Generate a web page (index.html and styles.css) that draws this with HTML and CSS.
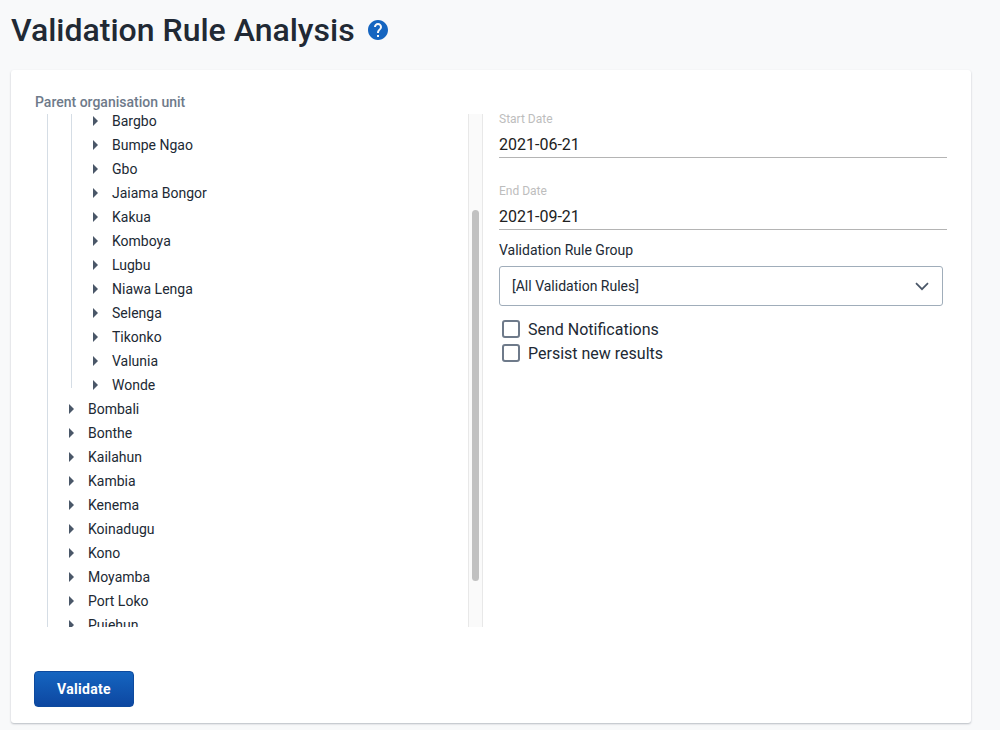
FILE: index.html
```html
<!DOCTYPE html>
<html>
<head>
  <meta charset="utf-8" />
  <title>Validation Rule Analysis</title>
  <link rel="stylesheet" href="styles.css">
</head>
<body>

<div class="titleRow">
  <h1>Validation Rule Analysis</h1>
  <svg class="helpIcon" width="24" height="24" viewBox="0 0 24 24">
    <path fill="#1565c0" d="M12 2C6.48 2 2 6.48 2 12s4.48 10 10 10 10-4.48 10-10S17.52 2 12 2zm1 17h-2v-2h2v2zm2.07-7.75l-.9.92C13.45 12.9 13 13.5 13 15h-2v-.5c0-1.1.45-2.1 1.17-2.83l1.24-1.26c.37-.36.59-.86.59-1.41 0-1.1-.9-2-2-2s-2 .9-2 2H8c0-2.21 1.79-4 4-4s4 1.79 4 4c0 .88-.36 1.68-.93 2.25z"/>
  </svg>
</div>

<div class="card">
  <div class="columns">

    <div class="treeCol">
      <div class="treeLabel">Parent organisation unit</div>
      <div class="treeBox">
        <div class="treeView">
          <div class="treeLevel1">
            <div class="treeLevel2">
              <div class="treeRow"><span class="arrow"></span>Bargbo</div>
              <div class="treeRow"><span class="arrow"></span>Bumpe Ngao</div>
              <div class="treeRow"><span class="arrow"></span>Gbo</div>
              <div class="treeRow"><span class="arrow"></span>Jaiama Bongor</div>
              <div class="treeRow"><span class="arrow"></span>Kakua</div>
              <div class="treeRow"><span class="arrow"></span>Komboya</div>
              <div class="treeRow"><span class="arrow"></span>Lugbu</div>
              <div class="treeRow"><span class="arrow"></span>Niawa Lenga</div>
              <div class="treeRow"><span class="arrow"></span>Selenga</div>
              <div class="treeRow"><span class="arrow"></span>Tikonko</div>
              <div class="treeRow"><span class="arrow"></span>Valunia</div>
              <div class="treeRow"><span class="arrow"></span>Wonde</div>
            </div>
            <div class="treeRow"><span class="arrow"></span>Bombali</div>
            <div class="treeRow"><span class="arrow"></span>Bonthe</div>
            <div class="treeRow"><span class="arrow"></span>Kailahun</div>
            <div class="treeRow"><span class="arrow"></span>Kambia</div>
            <div class="treeRow"><span class="arrow"></span>Kenema</div>
            <div class="treeRow"><span class="arrow"></span>Koinadugu</div>
            <div class="treeRow"><span class="arrow"></span>Kono</div>
            <div class="treeRow"><span class="arrow"></span>Moyamba</div>
            <div class="treeRow"><span class="arrow"></span>Port Loko</div>
            <div class="treeRow"><span class="arrow"></span>Pujehun</div>
          </div>
        </div>
        <div class="scrollTrack"><div class="scrollThumb"></div></div>
      </div>
    </div>

    <div class="formCol">
      <div class="dateField">
        <label>Start Date</label>
        <div class="dateValue">2021-06-21</div>
      </div>
      <div class="dateField">
        <label>End Date</label>
        <div class="dateValue">2021-09-21</div>
      </div>
      <div class="selectLabel">Validation Rule Group</div>
      <div class="selectBox">
        <span>[All Validation Rules]</span>
        <svg width="14" height="9" viewBox="0 0 14 9">
          <path d="M1 1.2l6 6 6-6" fill="none" stroke="#4a5768" stroke-width="1.7"/>
        </svg>
      </div>
      <div class="checkRow"><span class="checkBox"></span>Send Notifications</div>
      <div class="checkRow"><span class="checkBox"></span>Persist new results</div>
    </div>

  </div>
  <button class="validateBtn">Validate</button>
</div>

</body>
</html>
```

FILE: styles.css
```css
body {
  margin: 0;
  height: 730px;
  overflow: hidden;
  background: #f8f9fa;
  font-family: Roboto, sans-serif;
  color: #212934;
}

.titleRow {
  display: flex;
  align-items: center;
  height: 70px;
  padding-left: 11px;
  padding-bottom: 11px;
  box-sizing: border-box;
}

h1 {
  margin: 0;
  font-size: 32px;
  font-weight: 500;
  color: #212934;
}

.helpIcon {
  margin-left: 11px;
}

.card {
  width: 960px;
  height: 653px;
  margin-left: 11px;
  box-sizing: border-box;
  background: #fff;
  border-radius: 3px;
  box-shadow: 0 1px 2px #b8bcc2;
  padding-top: 24px;
}

.columns {
  display: flex;
  height: 533px;
}

.treeCol {
  width: 473px;
  flex: none;
}

.treeLabel {
  height: 20px;
  padding-left: 24px;
  font-size: 14px;
  font-weight: 500;
  line-height: 16px;
  color: #6e7a8a;
}

.treeBox {
  display: flex;
  height: 513px;
}

.treeView {
  width: 457px;
  overflow: hidden;
}

.treeLevel1 {
  margin-top: -5px;
  margin-left: 36px;
  border-left: 1px solid #d5dde5;
  padding-left: 16px;
}

.treeLevel2 {
  margin-left: 7px;
  border-left: 1px solid #d5dde5;
  padding-left: 16px;
  margin-bottom: 9px;
  height: 279px;
}

.treeRow {
  display: flex;
  align-items: center;
  height: 24px;
  font-size: 14px;
  color: #212934;
}

.arrow {
  width: 0;
  height: 0;
  margin-left: 5px;
  margin-right: 14px;
  border-left: 5px solid #4a5768;
  border-top: 5px solid transparent;
  border-bottom: 5px solid transparent;
}

.scrollTrack {
  width: 15px;
  flex: none;
  box-sizing: border-box;
  background: #fafafa;
  border-left: 1px solid #e8e8e8;
  border-right: 1px solid #e8e8e8;
  padding: 96px 3px 0 3px;
}

.scrollThumb {
  height: 371px;
  background: #c1c1c1;
  border-radius: 4px;
}

.formCol {
  width: 448px;
  margin-left: 15px;
  padding-top: 16px;
  flex: none;
}

.dateField {
  height: 72px;
}

.dateField label {
  display: block;
  height: 24px;
  font-size: 12px;
  line-height: 18px;
  color: #bdbdbd;
}

.dateValue {
  height: 23px;
  font-size: 16px;
  line-height: 22px;
  color: #212121;
  border-bottom: 1px solid #b4b4b4;
}

.selectLabel {
  margin-top: -17px;
  height: 29px;
  font-size: 14px;
  line-height: 26px;
  color: #212934;
}

.selectBox {
  display: flex;
  align-items: center;
  justify-content: space-between;
  width: 444px;
  height: 40px;
  box-sizing: border-box;
  padding: 0 13px 0 12px;
  border: 1px solid #a0adba;
  border-radius: 3px;
  font-size: 14px;
  color: #212934;
}

.checkRow {
  display: flex;
  align-items: center;
  height: 24px;
  font-size: 16px;
  color: #212934;
}

.selectBox + .checkRow {
  margin-top: 11px;
}

.checkBox {
  width: 18px;
  height: 18px;
  box-sizing: border-box;
  margin-left: 3px;
  margin-right: 8px;
  border: 2px solid #6e7a8a;
  border-radius: 3px;
}

.validateBtn {
  display: block;
  width: 100px;
  height: 36px;
  margin: 44px 0 0 23px;
  background: linear-gradient(#1565c0, #0d47a1);
  color: #fff;
  border: 1px solid #0d4a9e;
  border-radius: 4px;
  font-family: Roboto, sans-serif;
  font-size: 14px;
  font-weight: 700;
  letter-spacing: 0.3px;
}
```
